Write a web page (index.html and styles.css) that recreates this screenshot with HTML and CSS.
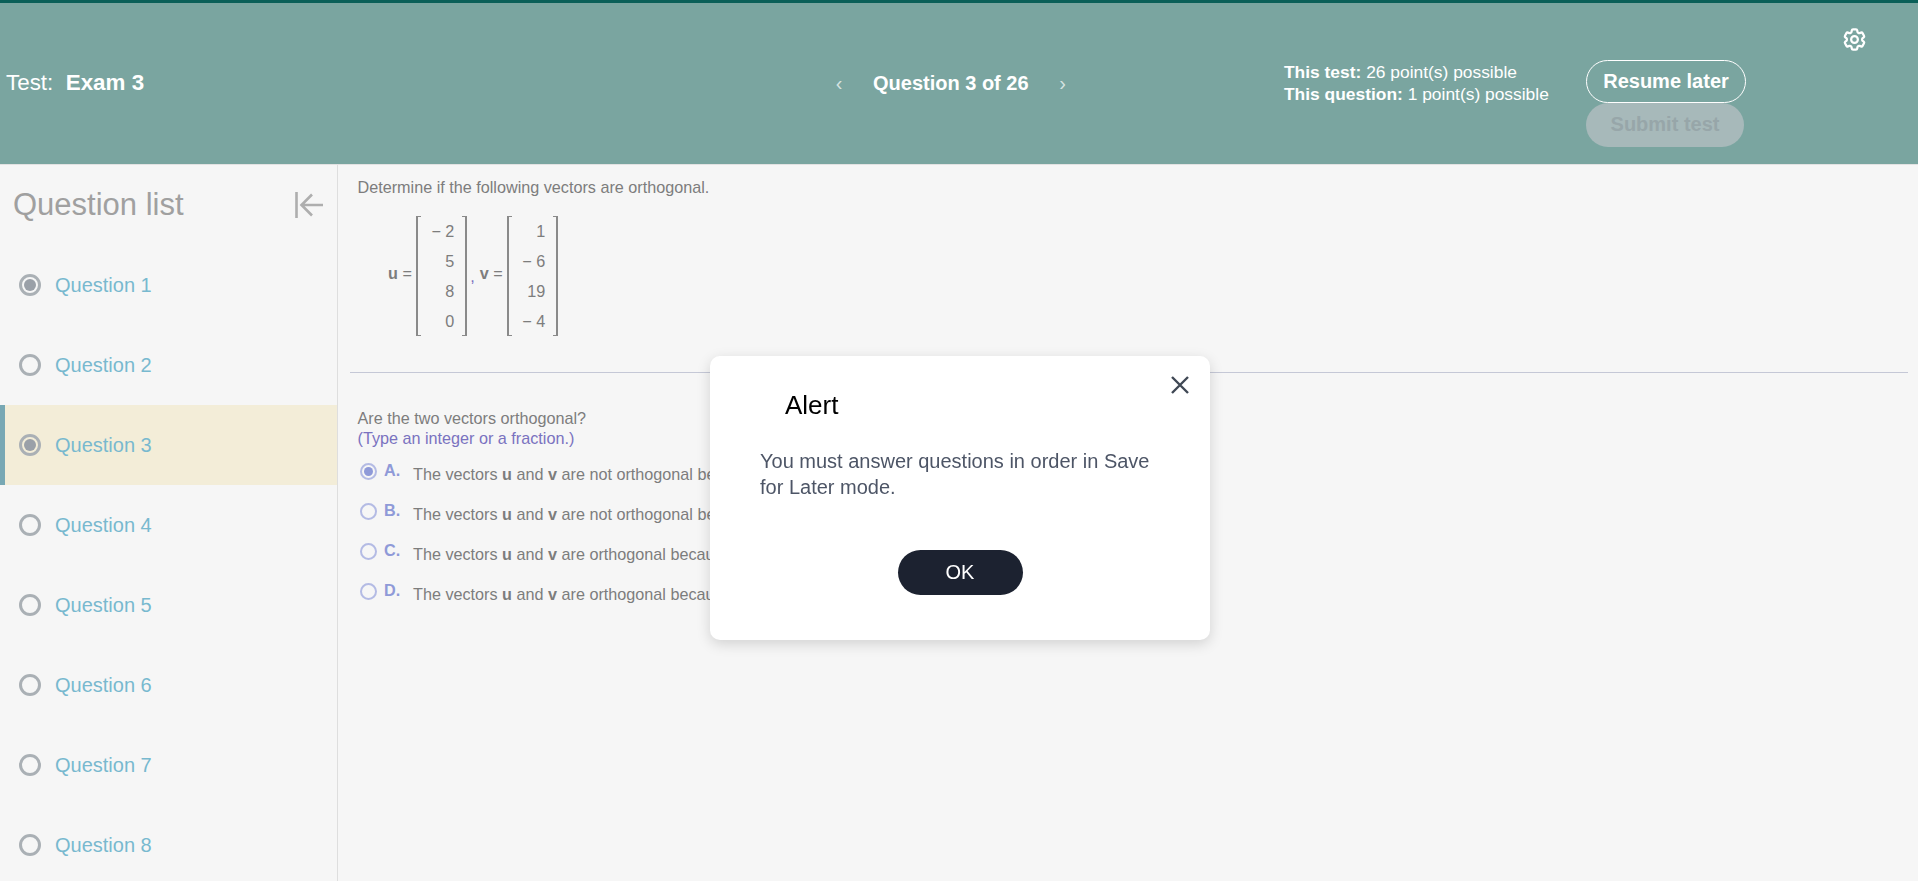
FILE: index.html
```html
<!DOCTYPE html>
<html lang="en">

<head>
    <meta charset="UTF-8">
    <meta name="viewport" content="width=device-width, initial-scale=1.0">
    <title>Exam 3</title>
    <link rel="stylesheet" href="styles.css">
</head>

<body>

    <header class="top-bar">
        <div class="test-name">Test:&nbsp; <strong>Exam 3</strong></div>

        <nav class="question-nav">
            <span class="chevron">&lsaquo;</span>
            <strong>Question 3 of 26</strong>
            <span class="chevron">&rsaquo;</span>
        </nav>

        <div class="points">
            <div><strong>This test:</strong> 26 point(s) possible</div>
            <div><strong>This question:</strong> 1 point(s) possible</div>
        </div>

        <div class="test-buttons">
            <button class="btn-resume">Resume later</button>
            <button class="btn-submit">Submit test</button>
        </div>

        <svg class="gear" viewBox="0 0 24 24" fill="none" stroke="#fff" stroke-width="2">
            <path d="M9.594 3.94c.09-.542.56-.94 1.11-.94h2.593c.55 0 1.02.398 1.11.94l.213 1.281c.063.374.313.686.645.87.074.04.147.083.22.127.324.196.72.257 1.075.124l1.217-.456a1.125 1.125 0 011.37.49l1.296 2.247a1.125 1.125 0 01-.26 1.431l-1.003.827c-.293.24-.438.613-.431.992a6.759 6.759 0 010 .255c-.007.378.138.75.43.99l1.005.828c.424.35.534.954.26 1.43l-1.298 2.247a1.125 1.125 0 01-1.369.491l-1.217-.456c-.355-.133-.75-.072-1.076.124a6.57 6.57 0 01-.22.128c-.331.183-.581.495-.644.869l-.213 1.28c-.09.543-.56.941-1.11.941h-2.594c-.55 0-1.02-.398-1.11-.94l-.213-1.281c-.062-.374-.312-.686-.644-.87a6.52 6.52 0 01-.22-.127c-.325-.196-.72-.257-1.076-.124l-1.217.456a1.125 1.125 0 01-1.369-.49l-1.297-2.247a1.125 1.125 0 01.26-1.431l1.004-.827c.292-.24.437-.613.43-.992a6.932 6.932 0 010-.255c.007-.378-.138-.75-.43-.99l-1.004-.828a1.125 1.125 0 01-.26-1.43l1.297-2.247a1.125 1.125 0 011.37-.491l1.216.456c.356.133.751.072 1.076-.124.072-.044.146-.087.22-.128.332-.183.582-.495.644-.869l.214-1.281z" />
            <circle cx="12" cy="12" r="3" />
        </svg>
    </header>

    <div class="page-body">
        <aside class="question-list">
            <div class="list-head">
                <h2>Question list</h2>
                <svg class="collapse-icon" viewBox="0 0 28 26" fill="none" stroke="#aeaeae" stroke-width="2.6">
                    <path d="M1.5 0v26" />
                    <path d="M28 13H7M17 2.5 6.5 13 17 23.5" />
                </svg>
            </div>
            <div class="list-row"><span class="radio checked"></span>Question 1</div>
            <div class="list-row"><span class="radio"></span>Question 2</div>
            <div class="list-row current"><span class="radio checked"></span>Question 3</div>
            <div class="list-row"><span class="radio"></span>Question 4</div>
            <div class="list-row"><span class="radio"></span>Question 5</div>
            <div class="list-row"><span class="radio"></span>Question 6</div>
            <div class="list-row"><span class="radio"></span>Question 7</div>
            <div class="list-row"><span class="radio"></span>Question 8</div>
        </aside>

        <main class="question">
            <p class="prompt">Determine if the following vectors are orthogonal.</p>

            <div class="math">
                <span class="math-label"><b>u</b>&nbsp;=&nbsp;</span>
                <div class="matrix">
                    <span class="bracket left"></span>
                    <div class="cells">
                        <div>&minus; 2</div>
                        <div>5</div>
                        <div>8</div>
                        <div>0</div>
                    </div>
                    <span class="bracket right"></span>
                </div>
                <span class="comma">,</span>
                <span class="math-label"><b>v</b>&nbsp;=&nbsp;</span>
                <div class="matrix">
                    <span class="bracket left"></span>
                    <div class="cells">
                        <div>1</div>
                        <div>&minus; 6</div>
                        <div>19</div>
                        <div>&minus; 4</div>
                    </div>
                    <span class="bracket right"></span>
                </div>
            </div>

            <hr class="divider">

            <p class="prompt">Are the two vectors orthogonal?<br><span class="hint">(Type an integer or a fraction.)</span></p>

            <div class="options">
                <div class="option"><span class="opt-radio checked"></span><b class="opt-letter">A.</b><span class="opt-text">The vectors <b>u</b> and <b>v</b> are not orthogonal because their product is not zero.</span></div>
                <div class="option"><span class="opt-radio"></span><b class="opt-letter">B.</b><span class="opt-text">The vectors <b>u</b> and <b>v</b> are not orthogonal because their product is zero.</span></div>
                <div class="option"><span class="opt-radio"></span><b class="opt-letter">C.</b><span class="opt-text">The vectors <b>u</b> and <b>v</b> are orthogonal because their product is not zero.</span></div>
                <div class="option"><span class="opt-radio"></span><b class="opt-letter">D.</b><span class="opt-text">The vectors <b>u</b> and <b>v</b> are orthogonal because their product is zero.</span></div>
            </div>
        </main>
    </div>

    <div class="overlay">
        <div class="modal">
            <svg class="modal-close" viewBox="0 0 18 18" fill="none" stroke="#3f4854" stroke-width="2.4">
                <path d="M1 1l16 16M17 1 1 17" />
            </svg>
            <h3>Alert</h3>
            <p>You must answer questions in order in Save for Later mode.</p>
            <button class="btn-ok">OK</button>
        </div>
    </div>

</body>

</html>
```

FILE: styles.css
```css
* {
    box-sizing: border-box;
}

html,
body {
    height: 100%;
}

body {
    margin: 0;
    overflow: hidden;
    font-family: "Liberation Sans", Arial, sans-serif;
    background-color: #f6f6f6;
    color: #7d7d7d;
}

/* top bar */
.top-bar {
    display: grid;
    grid-template-columns: 833px 451px 302px 160px auto;
    align-items: center;
    height: 165px;
    background-color: #7aa5a0;
    border-top: 3px solid #0a5f58;
    border-bottom: 1px solid #e2e2e2;
    color: #fff;
}

.test-name {
    margin-top: -1px;
    padding-left: 6px;
    font-size: 22.4px;
}

.question-nav {
    display: flex;
    align-items: center;
    gap: 28px;
    font-size: 20px;
}

.chevron {
    width: 12px;
    text-align: center;
    color: #d5e3e1;
}

.points {
    margin-top: -2px;
    font-size: 17.4px;
    line-height: 22px;
}

.test-buttons {
    display: flex;
    flex-direction: column;
    align-self: start;
    margin-top: 57px;
}

.test-buttons button {
    height: 44px;
    border-radius: 22px;
    font-family: inherit;
    font-size: 20px;
    font-weight: bold;
    padding: 0 0 1px;
}

.test-buttons .btn-resume {
    width: 160px;
    height: 43px;
    background: none;
    border: 1px solid #fff;
    color: #fff;
}

.btn-submit {
    width: 158px;
    background-color: #a7b9ba;
    border: none;
    color: #97a6a9;
}

.gear {
    align-self: start;
    width: 27px;
    height: 27px;
    margin: 23px 0 0 95px;
}

.page-body {
    display: flex;
    height: calc(100% - 165px);
}

/* question list */
.question-list {
    flex: 0 0 338px;
    border-right: 1px solid #dedede;
}

.list-head {
    display: flex;
    align-items: center;
    justify-content: space-between;
    height: 80px;
    padding: 0 14px 0 13px;
}

.list-head h2 {
    margin: 0;
    font-size: 31px;
    font-weight: normal;
    color: #a0a0a0;
}

.collapse-icon {
    width: 28px;
    height: 26px;
}

.list-row {
    display: flex;
    align-items: center;
    gap: 14px;
    height: 80px;
    padding-left: 19px;
    font-size: 20px;
    color: #78b9cf;
}

.list-row.current {
    padding-left: 14px;
    border-left: 5px solid #78a8b4;
    background-color: #f3edd8;
}

.radio {
    display: flex;
    align-items: center;
    justify-content: center;
    width: 22px;
    height: 22px;
    border: 3px solid #aab0b5;
    border-radius: 50%;
}

.radio.checked::after {
    content: "";
    width: 12px;
    height: 12px;
    border-radius: 50%;
    background-color: #9aa0a8;
}

/* question */
.question {
    flex: 1;
    padding: 12px 10px 0 12px;
    font-size: 16.2px;
}

.prompt {
    margin: 0 0 0 7.5px;
    line-height: 20px;
}

.hint {
    color: #7a72c0;
}

.math {
    display: flex;
    align-items: center;
    margin: 19px 0 0 38px;
}

.math-label {
    margin-top: -5px;
}

.matrix {
    display: flex;
    width: 51px;
}

.cells {
    flex: 1;
    text-align: right;
    line-height: 30px;
}

.bracket {
    flex: 0 0 5px;
    border: solid #8a8a8a;
    border-width: 1px 0;
}

.bracket.left {
    border-left-width: 2px;
    margin-right: 3px;
}

.bracket.right {
    border-right-width: 2px;
    margin-left: 8px;
}

.comma {
    margin: 0 5px 0 3px;
    color: #7a72c0;
}

.divider {
    height: 1px;
    margin: 36px 0 35px;
    border: none;
    background-color: #c5c8d6;
}

.options {
    margin: 4px 0 0 8px;
}

.option {
    display: flex;
    align-items: center;
    height: 40px;
}

.opt-radio {
    display: flex;
    align-items: center;
    justify-content: center;
    flex: 0 0 17px;
    height: 17px;
    margin: -2px 7px 0 2px;
    border: 2px solid #b4bbe4;
    border-radius: 50%;
}

.opt-radio.checked::after {
    content: "";
    width: 9px;
    height: 9px;
    border-radius: 50%;
    background-color: #8f9ad8;
}

.opt-letter {
    flex: 0 0 29px;
    margin-top: -3px;
    color: #8f9ad8;
}

.opt-text {
    margin-top: 4px;
}

/* alert */
.overlay {
    position: fixed;
    inset: 0;
    display: flex;
    justify-content: center;
    align-items: flex-start;
    padding: 356px 0 0 2px;
}

.modal {
    position: relative;
    width: 500px;
    height: 284px;
    padding: 34px 50px 0;
    border-radius: 10px;
    background-color: #fff;
    box-shadow: 0 4px 14px rgba(0, 0, 0, 0.15);
}

.modal-close {
    position: absolute;
    top: 20px;
    right: 21px;
    width: 18px;
    height: 18px;
}

.modal h3 {
    margin: 0 0 0 25px;
    font-size: 26px;
    line-height: 30px;
    font-weight: normal;
    color: #000;
}

.modal p {
    margin: 28px 0 0;
    font-size: 20px;
    line-height: 26px;
    color: #4d5566;
}

.btn-ok {
    display: block;
    width: 125px;
    height: 45px;
    margin: 50px auto 0;
    border: none;
    border-radius: 23px;
    background-color: #1c2230;
    color: #fff;
    font-family: inherit;
    font-size: 20px;
}
```
